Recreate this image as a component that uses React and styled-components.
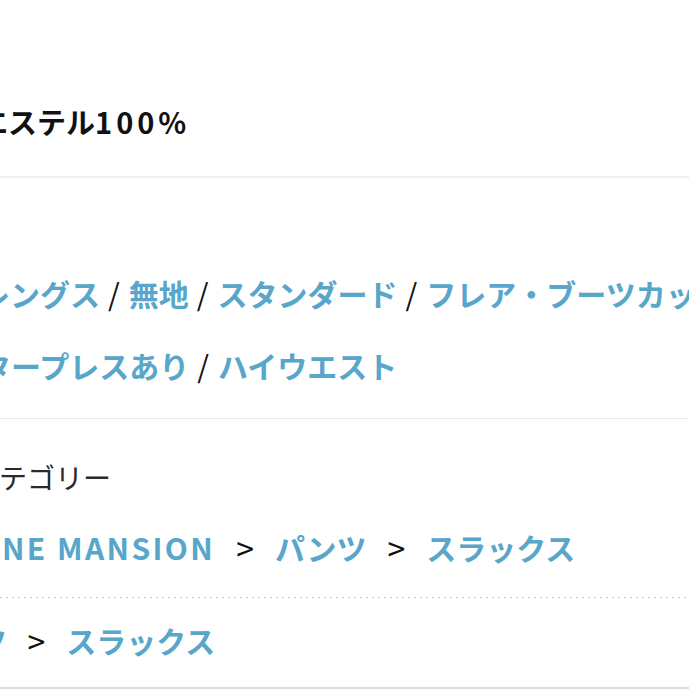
import styled, { createGlobalStyle } from "styled-components";

const tags = ["フルレングス", "無地", "スタンダード", "フレア・ブーツカット"];
const tagsSecond = ["センタープレスあり", "ハイウエスト"];

const TagRow = ({ items, shift }) => (
  <TagLine $shift={shift}>
    {items.map((tag, i) => (
      <span key={tag}>
        {i > 0 && <Slash>/</Slash>}
        <TagLink>{tag}</TagLink>
      </span>
    ))}
  </TagLine>
);

const App = () => {
  return (
    <>
      <GlobalStyle />
      <Page>
        <SpecSection>
          <SpecValue $shift={-79}>
            ポリエステル<Latin $spacing={4}>100%</Latin>
          </SpecValue>
        </SpecSection>

        <TagSection>
          <TagRow items={tags} shift={-80} />
          <TagRow items={tagsSecond} shift={-79} />
        </TagSection>

        <CategorySection>
          <CategoryLabel $shift={-29}>カテゴリー</CategoryLabel>
          <Crumbs $shift={2} $top={30}>
            <CrumbLink>
              <Latin $spacing={2.4}>NE MANSION</Latin>
            </CrumbLink>
            <Arrow>&gt;</Arrow>
            <CrumbLink>パンツ</CrumbLink>
            <Arrow>&gt;</Arrow>
            <CrumbLink>スラックス</CrumbLink>
          </Crumbs>
          <DottedRule />
          <Crumbs $shift={-85} $top={22}>
            <CrumbLink>パンツ</CrumbLink>
            <Arrow>&gt;</Arrow>
            <CrumbLink>スラックス</CrumbLink>
          </Crumbs>
        </CategorySection>
      </Page>
    </>
  );
};
export default App;

const GlobalStyle = createGlobalStyle`
  body {
    margin: 0;
    background: #fff;
    font-family: "Noto Sans CJK JP", "Noto Sans", sans-serif;
  }
`;

const Page = styled.div`
  width: 689px;
  height: 689px;
  overflow: hidden;
  background: #fff;
`;

const Latin = styled.span`
  letter-spacing: ${(p) => p.$spacing}px;
`;

const SpecSection = styled.section`
  padding: 101px 0 35px;
  border-bottom: 2px solid #efefef;
`;

const SpecValue = styled.div`
  margin-left: ${(p) => p.$shift}px;
  white-space: nowrap;
  font-size: 29px;
  font-weight: 700;
  line-height: 40px;
  color: #111;
`;

const TagSection = styled.section`
  padding: 79px 0 17px;
  border-bottom: 1px solid #e8e8e8;
`;

const TagLine = styled.div`
  margin-left: ${(p) => p.$shift}px;
  white-space: nowrap;
  font-size: 30px;
  line-height: 72px;
`;

const TagLink = styled.a`
  color: #58a6c9;
  font-weight: 700;
  text-decoration: none;
`;

const Slash = styled.span`
  display: inline-block;
  margin: 0 9px 0 8px;
  color: #111;
  font-weight: 400;
`;

const CategorySection = styled.section`
  padding: 38px 0 27px;
  border-bottom: 2px solid #dcdcdc;
`;

const CategoryLabel = styled.div`
  margin-left: ${(p) => p.$shift}px;
  white-space: nowrap;
  font-size: 28px;
  line-height: 40px;
  color: #2a2a2a;
`;

const Crumbs = styled.div`
  display: flex;
  align-items: center;
  margin: ${(p) => p.$top}px 0 30px ${(p) => p.$shift}px;
  white-space: nowrap;
  font-size: 30px;
  line-height: 40px;

  &:last-child {
    margin-bottom: 0;
  }
`;

const CrumbLink = styled.a`
  color: #58a6c9;
  font-weight: 700;
  text-decoration: none;
`;

const Arrow = styled.span`
  margin: 0 21px;
  color: #111;
  font-size: 32px;
  font-weight: 400;
`;

const DottedRule = styled.div`
  height: 1px;
  background-image: repeating-linear-gradient(to right, #c9c9c9 0 2px, transparent 2px 6px);
`;
